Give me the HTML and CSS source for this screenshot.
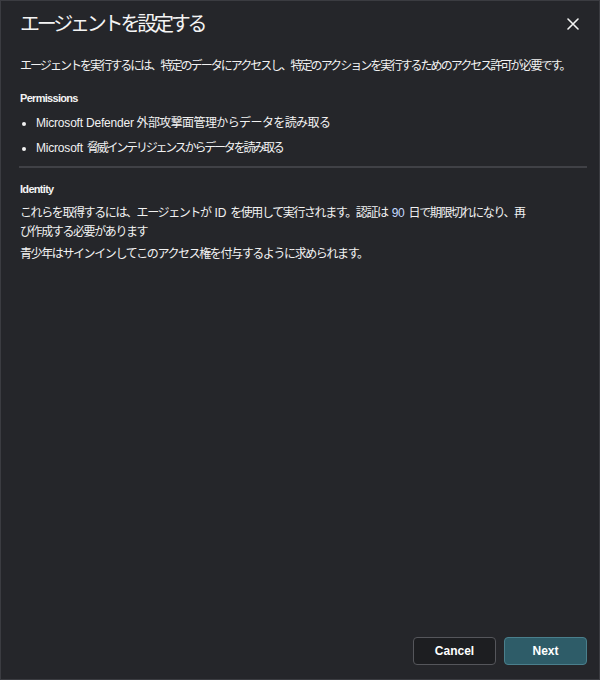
FILE: index.html
```html
<!DOCTYPE html>
<html lang="ja">
<head>
  <meta charset="UTF-8" />
  <meta name="viewport" content="width=device-width, initial-scale=1.0" />
  <title>エージェントを設定する</title>
  <link rel="stylesheet" href="styles.css">
</head>
<body>
  <div class="dialog">
    <div class="dialog-header">
      <h1 class="dialog-title">エージェントを設定する</h1>
      <button class="close-btn" aria-label="閉じる">
        <svg width="12" height="12" viewBox="0 0 12 12">
          <path d="M1 1 L11 11 M11 1 L1 11" stroke="#f2f2f2" stroke-width="1.6" stroke-linecap="round" fill="none" />
        </svg>
      </button>
    </div>

    <div class="dialog-body">
      <p class="intro">エージェントを実行するには、特定のデータにアクセスし、特定のアクションを実行するためのアクセス許可が必要です。</p>

      <h3 class="section-title">Permissions</h3>
      <ul class="perm-list">
        <li class="perm-wide"><span class="latin">Microsoft Defender</span> 外部攻撃面管理からデータを読み取る</li>
        <li class="perm-narrow"><span class="latin gap">Microsoft</span>脅威インテリジェンスからデータを読み取る</li>
      </ul>

      <hr class="divider" />

      <h3 class="section-title">Identity</h3>
      <p class="identity-text">これらを取得するには、エージェントが<span class="latin inline">ID</span>を使用して実行されます。認証は<span class="latin inline num">90</span>日で期限切れになり、再<br />び作成する必要があります</p>
      <p class="identity-text second">青少年はサインインしてこのアクセス権を付与するように求められます。</p>
    </div>

    <div class="dialog-footer">
      <button class="btn btn-cancel">Cancel</button>
      <button class="btn btn-next">Next</button>
    </div>
  </div>
</body>
</html>
```

FILE: styles.css
```css
* {
  box-sizing: border-box;
  margin: 0;
  padding: 0;
}

body {
  background: #1b1c1f;
  font-family: 'Liberation Sans', 'Noto Sans CJK JP', sans-serif;
  color: #f2f2f2;
}

.dialog {
  width: 600px;
  height: 680px;
  background: #25262a;
  border: 1px solid #3b3c41;
  display: flex;
  flex-direction: column;
}

.dialog-header {
  display: flex;
  justify-content: space-between;
  align-items: center;
  padding: 9px 19px 0 19px;
}

.dialog-title {
  font-size: 20px;
  font-weight: 400;
  line-height: 28px;
  letter-spacing: -3.2px;
  color: #f4f4f4;
}

.close-btn {
  background: transparent;
  border: none;
  width: 14px;
  height: 14px;
  display: flex;
  align-items: center;
  justify-content: center;
  cursor: pointer;
}

.dialog-body {
  flex: 1;
  padding: 0 12px 0 19px;
}

.intro {
  margin-top: 20px;
  font-size: 12px;
  line-height: 16px;
  letter-spacing: -1.95px;
}

.section-title {
  font-size: 11px;
  font-weight: 700;
  line-height: 16px;
  letter-spacing: -0.7px;
}

.intro + .section-title {
  margin-top: 16px;
}

.perm-list {
  list-style: none;
  margin-top: 9px;
}

.perm-list li {
  position: relative;
  padding-left: 16px;
  font-size: 12px;
  line-height: 16px;
  margin-bottom: 9px;
}

.perm-list li::before {
  content: '';
  position: absolute;
  left: 2px;
  top: 7px;
  width: 4px;
  height: 4px;
  border-radius: 50%;
  background: #f2f2f2;
}

.perm-wide {
  letter-spacing: -0.6px;
}

.perm-narrow {
  letter-spacing: -2.2px;
}

.latin {
  letter-spacing: -0.2px;
}

.latin.gap {
  margin-right: 4px;
}

.latin.inline {
  margin: 0 4px;
}

.num {
  color: #c4d9ff;
}

.divider {
  border: none;
  height: 2px;
  background: #404146;
  margin: 10px 0 13px -1px;
}

.identity-text {
  margin-top: 7px;
  font-size: 12px;
  line-height: 19px;
  letter-spacing: -1.4px;
}

.identity-text.second {
  margin-top: 3px;
}

.dialog-footer {
  display: flex;
  justify-content: flex-end;
  gap: 8px;
  padding: 0 12px 14px 0;
}

.btn {
  width: 83px;
  height: 28px;
  border-radius: 4px;
  font-family: 'Liberation Sans', sans-serif;
  font-size: 12px;
  font-weight: 700;
  color: #ffffff;
  cursor: pointer;
}

.btn-cancel {
  background: #1d1e21;
  border: 1px solid #55565b;
}

.btn-next {
  background: #2e5c68;
  border: 1px solid #4a7f8c;
}
```
